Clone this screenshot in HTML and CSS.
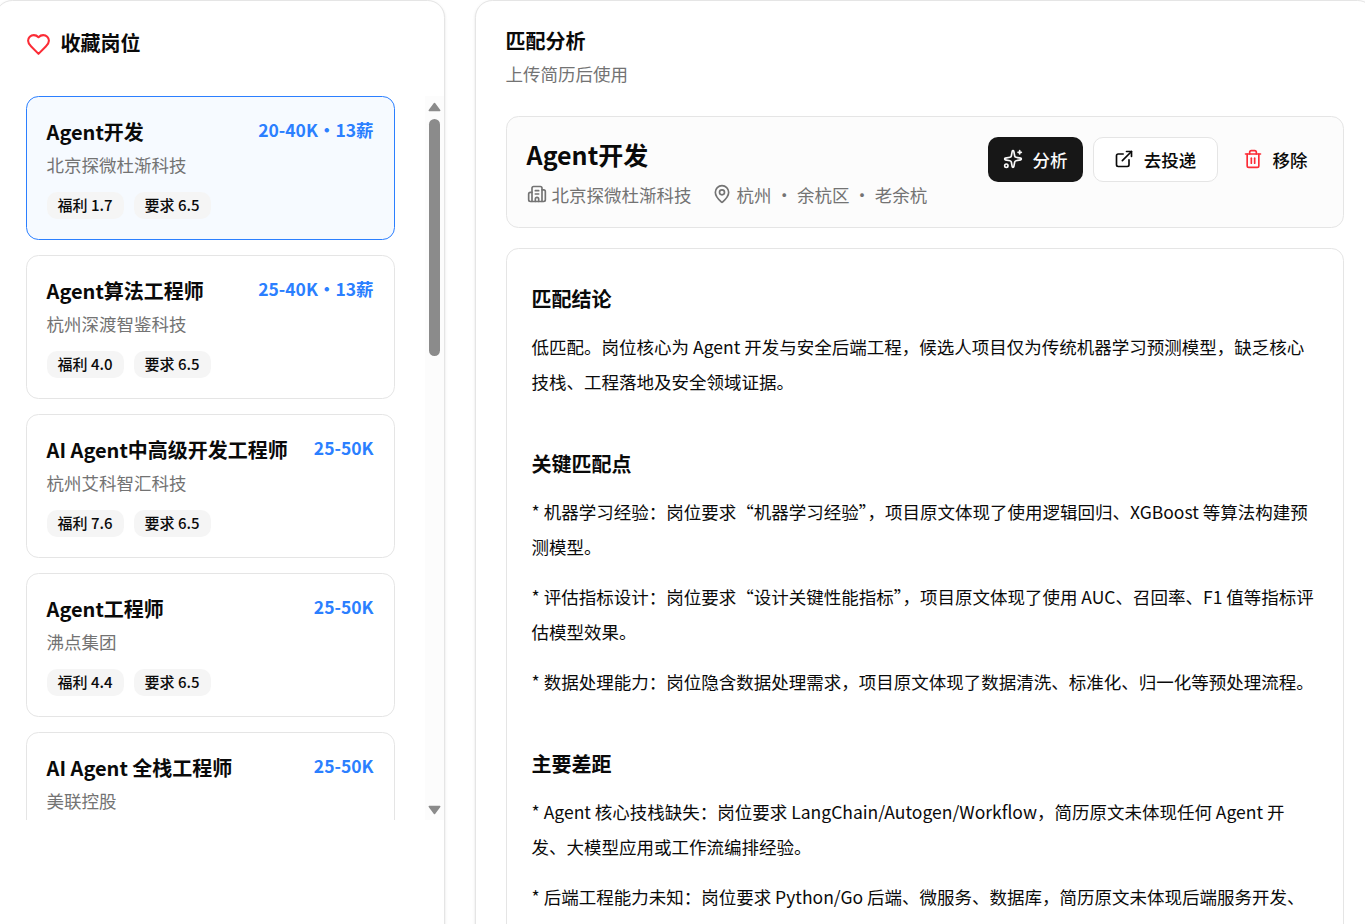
FILE: index.html
```html
<!DOCTYPE html>
<html lang="zh-CN">
<head>
  <meta charset="UTF-8">
  <title>收藏岗位</title>
  <meta name="viewport" content="width=device-width, initial-scale=1.0">
  <link rel="stylesheet" href="styles.css">
</head>
<body>
  <main class="layout">
    <aside class="panel sidebar">
      <header class="sidebar-header">
        <svg class="icon icon-heart" viewBox="0 0 24 24"><path d="M19 14c1.49-1.46 3-3.21 3-5.5A5.5 5.5 0 0 0 16.5 3c-1.76 0-3 .5-4.5 2-1.5-1.5-2.74-2-4.5-2A5.5 5.5 0 0 0 2 8.5c0 2.3 1.5 4.05 3 5.5l7 7Z"/></svg>
        <h2>收藏岗位</h2>
      </header>
      <div class="list-wrap">
        <div class="job-list">
          <article class="job active">
            <div class="job-top"><h3>Agent开发</h3><span class="salary">20-40K・13薪</span></div>
            <p class="company">北京探微杜渐科技</p>
            <div class="tags"><span class="tag">福利 1.7</span><span class="tag">要求 6.5</span></div>
          </article>
          <article class="job">
            <div class="job-top"><h3>Agent算法工程师</h3><span class="salary">25-40K・13薪</span></div>
            <p class="company">杭州深渡智鉴科技</p>
            <div class="tags"><span class="tag">福利 4.0</span><span class="tag">要求 6.5</span></div>
          </article>
          <article class="job">
            <div class="job-top"><h3>AI Agent中高级开发工程师</h3><span class="salary">25-50K</span></div>
            <p class="company">杭州艾科智汇科技</p>
            <div class="tags"><span class="tag">福利 7.6</span><span class="tag">要求 6.5</span></div>
          </article>
          <article class="job">
            <div class="job-top"><h3>Agent工程师</h3><span class="salary">25-50K</span></div>
            <p class="company">沸点集团</p>
            <div class="tags"><span class="tag">福利 4.4</span><span class="tag">要求 6.5</span></div>
          </article>
          <article class="job">
            <div class="job-top"><h3>AI Agent 全栈工程师</h3><span class="salary">25-50K</span></div>
            <p class="company">美联控股</p>
          </article>
        </div>
        <div class="scrollbar">
          <svg class="arrow" viewBox="0 0 13 10"><path d="M6.5 1.5 11.7 8.5H1.3Z"/></svg>
          <div class="track"><div class="thumb"></div></div>
          <svg class="arrow" viewBox="0 0 13 10"><path d="M1.3 1.5H11.7L6.5 8.5Z"/></svg>
        </div>
      </div>
    </aside>

    <section class="panel detail">
      <header class="detail-header">
        <h2>匹配分析</h2>
        <p>上传简历后使用</p>
      </header>

      <div class="summary">
        <div class="summary-info">
          <h1>Agent开发</h1>
          <div class="meta">
            <span class="meta-item">
              <svg class="icon" viewBox="0 0 24 24"><path d="M10 12h4"/><path d="M10 8h4"/><path d="M14 21v-3a2 2 0 0 0-4 0v3"/><path d="M6 10H4a2 2 0 0 0-2 2v7a2 2 0 0 0 2 2h16a2 2 0 0 0 2-2V9a2 2 0 0 0-2-2h-2"/><path d="M6 21V5a2 2 0 0 1 2-2h8a2 2 0 0 1 2 2v16"/></svg>
              北京探微杜渐科技
            </span>
            <span class="meta-item">
              <svg class="icon" viewBox="0 0 24 24"><path d="M20 10c0 4.993-5.539 10.193-7.399 11.799a1 1 0 0 1-1.202 0C9.539 20.193 4 14.993 4 10a8 8 0 0 1 16 0"/><circle cx="12" cy="10" r="3"/></svg>
              杭州 ・ 余杭区 ・ 老余杭
            </span>
          </div>
        </div>
        <div class="actions">
          <button class="btn btn-primary">
            <svg class="icon" viewBox="0 0 24 24"><path d="M11.017 2.814a1 1 0 0 1 1.966 0l1.051 5.558a2 2 0 0 0 1.594 1.594l5.558 1.051a1 1 0 0 1 0 1.966l-5.558 1.051a2 2 0 0 0-1.594 1.594l-1.051 5.558a1 1 0 0 1-1.966 0l-1.051-5.558a2 2 0 0 0-1.594-1.594l-5.558-1.051a1 1 0 0 1 0-1.966l5.558-1.051a2 2 0 0 0 1.594-1.594z"/><path d="M20 2v4"/><path d="M22 4h-4"/><circle cx="4" cy="20" r="2"/></svg>
            分析
          </button>
          <button class="btn btn-outline">
            <svg class="icon" viewBox="0 0 24 24"><path d="M15 3h6v6"/><path d="M10 14 21 3"/><path d="M18 13v6a2 2 0 0 1-2 2H5a2 2 0 0 1-2-2V8a2 2 0 0 1 2-2h6"/></svg>
            去投递
          </button>
          <button class="btn btn-ghost">
            <svg class="icon icon-trash" viewBox="0 0 24 24"><path d="M10 11v6"/><path d="M14 11v6"/><path d="M19 6v14a2 2 0 0 1-2 2H7a2 2 0 0 1-2-2V6"/><path d="M3 6h18"/><path d="M8 6V4a2 2 0 0 1 2-2h4a2 2 0 0 1 2 2v2"/></svg>
            移除
          </button>
        </div>
      </div>

      <div class="report">
        <section class="report-section">
          <h3>匹配结论</h3>
          <p>低匹配。岗位核心为 Agent 开发与安全后端工程，候选人项目仅为传统机器学习预测模型，缺乏核心技栈、工程落地及安全领域证据。</p>
        </section>
        <section class="report-section">
          <h3>关键匹配点</h3>
          <p>* 机器学习经验：岗位要求“机器学习经验”，项目原文体现了使用逻辑回归、XGBoost 等算法构建预测模型。</p>
          <p>* 评估指标设计：岗位要求“设计关键性能指标”，项目原文体现了使用 AUC、召回率、F1 值等指标评估模型效果。</p>
          <p>* 数据处理能力：岗位隐含数据处理需求，项目原文体现了数据清洗、标准化、归一化等预处理流程。</p>
        </section>
        <section class="report-section">
          <h3>主要差距</h3>
          <p>* Agent 核心技栈缺失：岗位要求 LangChain/Autogen/Workflow，简历原文未体现任何 Agent 开发、大模型应用或工作流编排经验。</p>
          <p>* 后端工程能力未知：岗位要求 Python/Go 后端、微服务、数据库，简历原文未体现后端服务开发、</p>
        </section>
      </div>
    </section>
  </main>
</body>
</html>
```
FILE: styles.css
```css
* {
  box-sizing: border-box;
}

html, body {
  margin: 0;
  height: 100%;
  overflow: hidden;
}

body {
  font-family: "Noto Sans CJK SC", sans-serif;
  font-size: 17.5px;
  line-height: 25px;
  color: #0a0a0a;
  background: #fff;
}

h1, h2, h3, p {
  margin: 0;
}

.layout {
  display: flex;
  gap: 30px;
  width: 1380px;
  height: 960px;
  margin-left: -5.4px;
}

.panel {
  border: 1px solid #e5e5e5;
  border-radius: 17.5px;
  background: #fff;
  box-shadow: 0 1px 3px rgba(0, 0, 0, 0.1), 0 1px 2px -1px rgba(0, 0, 0, 0.1);
}

.icon {
  width: 20px;
  height: 20px;
  flex-shrink: 0;
  fill: none;
  stroke: currentColor;
  stroke-width: 2;
  stroke-linecap: round;
  stroke-linejoin: round;
}

/* sidebar */

.sidebar {
  width: 450px;
  flex-shrink: 0;
  padding-left: 30px;
}

.sidebar-header {
  display: flex;
  align-items: center;
  gap: 10px;
  height: 35px;
  margin-top: 24px;
}

.sidebar-header h2,
.detail-header h2,
.report h3 {
  font-size: 20px;
  font-weight: 600;
}

.icon-heart {
  width: 25px;
  height: 25px;
  margin-top: 3px;
  color: #fb2c36;
}

.list-wrap {
  display: flex;
  justify-content: space-between;
  height: 724px;
  margin-top: 36px;
}

.job-list {
  width: 369px;
  overflow: hidden;
}

.job {
  height: 144px;
  margin-bottom: 15px;
  padding: 20px;
  border: 1px solid #e5e5e5;
  border-radius: 12.5px;
}

.job.active {
  border-color: #2b7fff;
  background: #f6faff;
}

.job-top {
  display: flex;
  justify-content: space-between;
  align-items: flex-start;
  height: 30px;
  white-space: nowrap;
}

.job-top h3 {
  font-size: 20px;
  font-weight: 600;
  line-height: 30px;
}

.salary {
  color: #2b7fff;
  font-weight: 600;
}

.company,
.detail-header p,
.meta {
  color: #737373;
}

.company {
  margin-top: 5px;
}

.tags {
  display: flex;
  gap: 10px;
  margin-top: 15px;
}

.tag {
  padding: 2px 11px 3px;
  border-radius: 10px;
  background: #f5f5f5;
  font-size: 15px;
  font-weight: 500;
  line-height: 22px;
}

.scrollbar {
  display: flex;
  flex-direction: column;
  align-items: center;
  gap: 1px;
  width: 19px;
  padding: 6px 0 5px;
  background: #fcfcfc;
}

.arrow {
  width: 13px;
  height: 10px;
  fill: #8b8b8b;
  stroke: #8b8b8b;
  stroke-width: 1.5;
  stroke-linejoin: round;
}

.track {
  flex: 1;
  padding-top: 6px;
}

.thumb {
  width: 11px;
  height: 237px;
  border-radius: 5.5px;
  background: #8b8b8b;
}

/* detail */

.detail {
  flex: 1;
  padding: 27px 30px 0;
}

.detail-header p {
  margin-top: 8px;
}

.summary {
  display: flex;
  justify-content: space-between;
  align-items: flex-start;
  height: 112px;
  margin-top: 30px;
  padding: 20px;
  border: 1px solid #e5e5e5;
  border-radius: 12.5px;
  background: #fcfcfc;
}

.summary h1 {
  font-size: 25px;
  font-weight: 600;
  line-height: 35px;
}

.meta {
  display: flex;
  gap: 20px;
  margin-top: 10px;
}

.meta-item {
  display: flex;
  align-items: center;
  gap: 5px;
}

.meta .icon,
.btn .icon {
  margin-bottom: 2px;
}

.actions {
  display: flex;
  gap: 10px;
}

.btn {
  display: flex;
  align-items: center;
  gap: 10px;
  height: 45px;
  padding: 0 15px;
  border: 0;
  border-radius: 10px;
  background: none;
  color: inherit;
  font: inherit;
  font-weight: 500;
}

.btn-primary {
  background: #171717;
  color: #fafafa;
}

.btn-outline {
  padding: 0 20.3px;
  border: 1px solid #e5e5e5;
  background: #fff;
}

.icon-trash {
  color: #fb2c36;
}

.report {
  height: 800px;
  margin-top: 20px;
  padding: 25px;
  border: 1px solid #e5e5e5;
  border-radius: 12.5px;
}

.report-section {
  margin-bottom: 40px;
}

.report h3 {
  padding: 11px 0 6px;
  line-height: 28px;
}

.report p {
  margin-top: 10px;
  line-height: 35px;
}

.report p + p {
  margin-top: 15px;
}
```
